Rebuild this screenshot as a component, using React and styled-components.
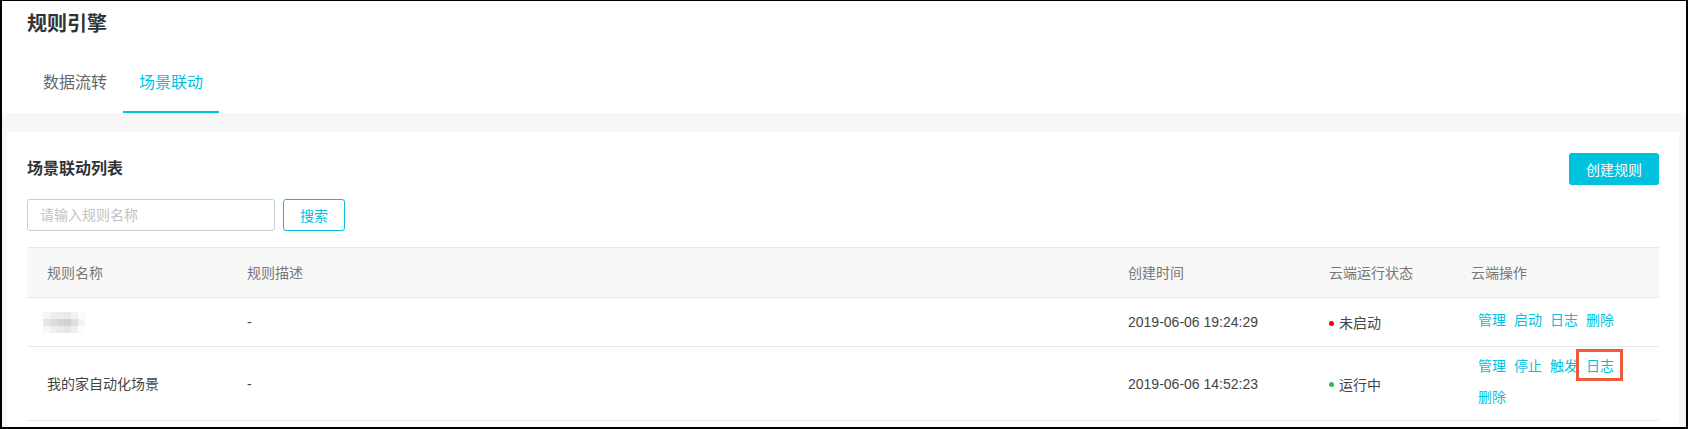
import React from "react";
import styled, { createGlobalStyle } from "styled-components";

const CYAN = "#00c1de";

const GlobalStyle = createGlobalStyle`
  html, body { margin: 0; padding: 0; }
  body {
    font-family: "Liberation Sans", "Noto Sans CJK SC", sans-serif;
    font-size: 14px;
    color: #333;
    background: #fff;
  }
  * { box-sizing: border-box; }
`;

const Frame = styled.div`
  width: 1688px;
  height: 429px;
  border-style: solid;
  border-color: #000;
  border-width: 1px 2px 2px 2px;
  overflow: hidden;
  background: #f7f7f7;
  display: flex;
  flex-direction: column;
`;

const Header = styled.header`
  background: #fff;
  padding: 9px 0 0 25px;
`;

const PageTitle = styled.h1`
  margin: 0;
  font-size: 20px;
  line-height: 28px;
  font-weight: bold;
  color: #333;
`;

const TabBar = styled.nav`
  display: flex;
  margin-top: 20px;
`;

const Tab = styled.div`
  padding: 13px 16px 16px;
  font-size: 16px;
  line-height: 24px;
  color: ${(p) => (p.$active ? CYAN : "#666")};
  border-bottom: 2px solid ${(p) => (p.$active ? CYAN : "transparent")};
  cursor: pointer;
`;

const Body = styled.main`
  flex: 1;
  padding: 19px 7px 0 5px;
  display: flex;
  flex-direction: column;
`;

const Card = styled.section`
  flex: 1;
  background: #fff;
  padding: 21px 20px 20px;
`;

const CardHead = styled.div`
  display: flex;
  align-items: center;
  justify-content: space-between;
  height: 32px;
`;

const CardTitle = styled.h2`
  margin: 0;
  font-size: 16px;
  line-height: 24px;
  font-weight: bold;
  color: #333;
`;

const PrimaryButton = styled.button`
  width: 90px;
  height: 32px;
  border: none;
  border-radius: 3px;
  background: ${CYAN};
  color: #fff;
  font-family: inherit;
  font-size: 14px;
  cursor: pointer;
`;

const SearchRow = styled.div`
  display: flex;
  gap: 8px;
  margin-top: 14px;
`;

const SearchInput = styled.input`
  width: 248px;
  height: 32px;
  border: 1px solid #c9cdd4;
  border-radius: 3px;
  padding: 0 12px;
  font-family: inherit;
  font-size: 14px;
  color: #333;
  outline: none;
  &::placeholder { color: #c2c2c2; }
`;

const OutlineButton = styled.button`
  width: 62px;
  height: 32px;
  border: 1px solid ${CYAN};
  border-radius: 3px;
  background: #fff;
  color: ${CYAN};
  font-family: inherit;
  font-size: 14px;
  cursor: pointer;
`;

const Table = styled.table`
  margin-top: 16px;
  width: 100%;
  border-collapse: collapse;
  table-layout: fixed;
`;

const Th = styled.th`
  text-align: left;
  font-weight: normal;
  color: #777;
  background: #f8f8f8;
  height: 50px;
  padding: 0 20px;
  border-top: 1px solid #e8e8e8;
  border-bottom: 1px solid #e8e8e8;
  line-height: 20px;
`;

const Td = styled.td`
  height: ${(p) => (p.$tall ? "auto" : "49px")};
  padding: ${(p) => (p.$ops ? "9px 20px 13px 27px" : "0 20px")};
  border-bottom: 1px solid #e8e8e8;
  color: #444;
  line-height: 20px;
  vertical-align: middle;
`;

const Mosaic = styled.div`
  display: grid;
  grid-template-columns: repeat(6, 7px);
  grid-auto-rows: 7px;
  margin-left: -4px;
  width: 42px;
`;

const Pixel = styled.span`
  background: ${(p) => p.$c};
`;

const Status = styled.span`
  display: inline-flex;
  align-items: center;
  gap: 5px;
`;

const Dot = styled.i`
  width: 5px;
  height: 5px;
  border-radius: 50%;
  background: ${(p) => p.$color};
`;

const Ops = styled.div`
  display: flex;
  flex-wrap: wrap;
  column-gap: 8px;
  row-gap: 11px;
`;

const OpLink = styled.a`
  position: relative;
  color: ${CYAN};
  line-height: 20px;
  cursor: pointer;
  text-decoration: none;
  ${(p) =>
    p.$marked &&
    `
    &::after {
      content: "";
      position: absolute;
      top: -7px;
      bottom: -5px;
      left: -10px;
      right: -9px;
      border: 3px solid #ef5a3b;
    }
  `}
`;

const mosaicColors = [
  "#f6f6f6", "#efefef", "#ececec", "#eaeaea", "#f1f1f1", "#fbfbfb",
  "#e6e6e6", "#dddddd", "#d6d6d6", "#d2d2d2", "#dfdfdf", "#f3f3f3",
  "#f7f7f7", "#efefef", "#ebebeb", "#e6e6e6", "#efefef", "#fcfcfc",
];

const rows = [
  {
    name: null,
    desc: "-",
    time: "2019-06-06 19:24:29",
    status: "未启动",
    dot: "#f00000",
    ops: ["管理", "启动", "日志", "删除"],
  },
  {
    name: "我的家自动化场景",
    desc: "-",
    time: "2019-06-06 14:52:23",
    status: "运行中",
    dot: "#3cb44b",
    ops: ["管理", "停止", "触发", "日志", "删除"],
    marked: 3,
    tall: true,
  },
];

export default function App() {
  return (
    <>
      <GlobalStyle />
      <Frame>
        <Header>
          <PageTitle>规则引擎</PageTitle>
          <TabBar>
            <Tab>数据流转</Tab>
            <Tab $active>场景联动</Tab>
          </TabBar>
        </Header>
        <Body>
          <Card>
            <CardHead>
              <CardTitle>场景联动列表</CardTitle>
              <PrimaryButton>创建规则</PrimaryButton>
            </CardHead>
            <SearchRow>
              <SearchInput placeholder="请输入规则名称" />
              <OutlineButton>搜索</OutlineButton>
            </SearchRow>
            <Table>
              <colgroup>
                <col style={{ width: 200 }} />
                <col style={{ width: 881 }} />
                <col style={{ width: 201 }} />
                <col style={{ width: 142 }} />
                <col />
              </colgroup>
              <thead>
                <tr>
                  <Th>规则名称</Th>
                  <Th>规则描述</Th>
                  <Th>创建时间</Th>
                  <Th>云端运行状态</Th>
                  <Th>云端操作</Th>
                </tr>
              </thead>
              <tbody>
                {rows.map((r, i) => (
                  <tr key={i}>
                    <Td $tall={r.tall}>
                      {r.name ? (
                        r.name
                      ) : (
                        <Mosaic>
                          {mosaicColors.map((c, j) => (
                            <Pixel key={j} $c={c} />
                          ))}
                        </Mosaic>
                      )}
                    </Td>
                    <Td $tall={r.tall}>{r.desc}</Td>
                    <Td $tall={r.tall}>{r.time}</Td>
                    <Td $tall={r.tall}>
                      <Status>
                        <Dot $color={r.dot} />
                        {r.status}
                      </Status>
                    </Td>
                    <Td $tall={r.tall} $ops>
                      <Ops>
                        {r.ops.map((o, j) => (
                          <OpLink key={j} $marked={r.marked === j}>
                            {o}
                          </OpLink>
                        ))}
                      </Ops>
                    </Td>
                  </tr>
                ))}
              </tbody>
            </Table>
          </Card>
        </Body>
      </Frame>
    </>
  );
}
